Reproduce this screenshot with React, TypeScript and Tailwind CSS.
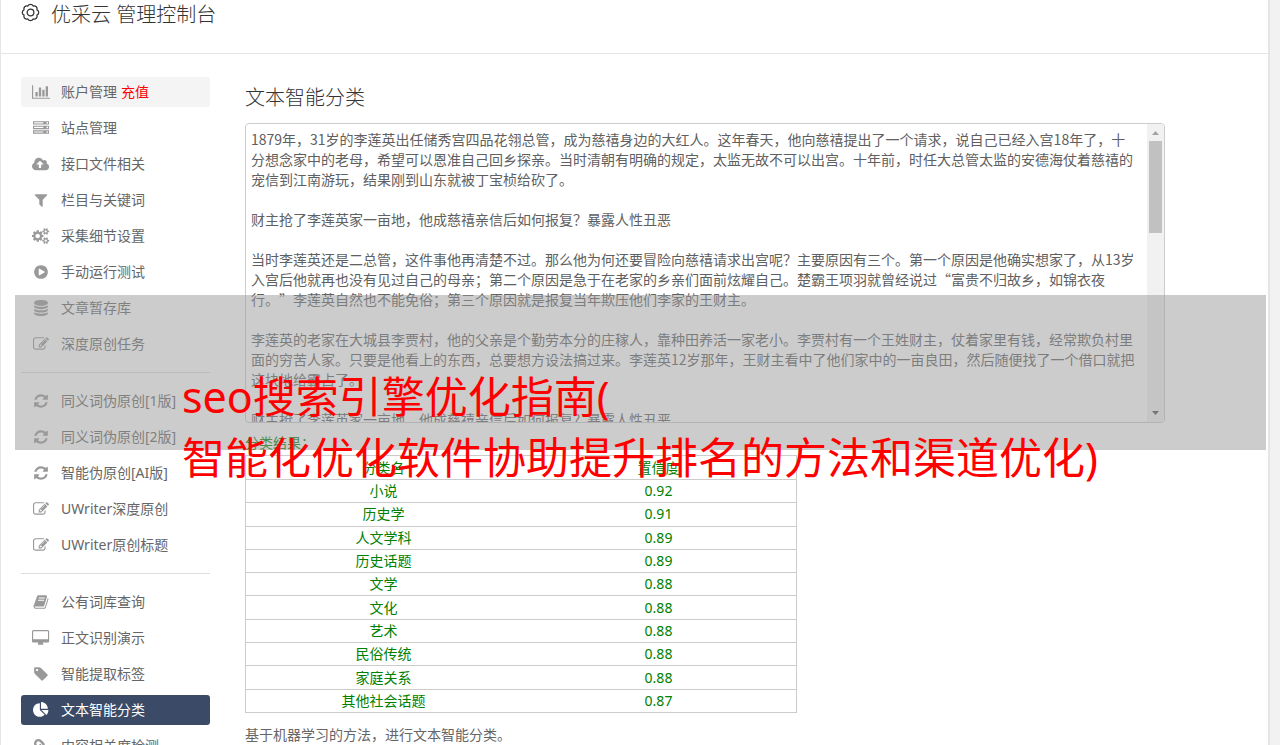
import { type ReactNode } from "react";
import { FaLink } from "react-icons/fa";

type GlyphName =
  | "chart"
  | "server"
  | "upload"
  | "filter"
  | "cogs"
  | "play"
  | "database"
  | "edit"
  | "refresh"
  | "book"
  | "desktop"
  | "tag"
  | "pie";

// [viewBox width, path]; every glyph is 1792 units high
const GLYPHS: Record<GlyphName, [number, string]> = {
  chart: [2048, "M640 896v512h-256v-512h256zm384-512v1024h-256v-1024h256zm1024 1152v128h-2048v-1536h128v1408h1920zm-640-896v768h-256v-768h256zm384-384v1152h-256v-1152h256z"],
  server: [1792, "M128 1408h1024v-128h-1024v128zm0-512h1024v-128h-1024v128zm1568 448q0-40-28-68t-68-28-68 28-28 68 28 68 68 28 68-28 28-68zm-1568-960h1024v-128h-1024v128zm1568 448q0-40-28-68t-68-28-68 28-28 68 28 68 68 28 68-28 28-68zm0-512q0-40-28-68t-68-28-68 28-28 68 28 68 68 28 68-28 28-68zm96 832v384h-1792v-384h1792zm0-512v384h-1792v-384h1792zm0-512v384h-1792v-384h1792z"],
  upload: [1920, "M1280 928q0-14-9-23l-352-352q-9-9-23-9t-23 9l-351 351q-10 12-10 24 0 14 9 23t23 9h224v352q0 13 9.5 22.5t22.5 9.5h192q13 0 22.5-9.5t9.5-22.5v-352h224q13 0 22.5-9.5t9.5-22.5zm640 288q0 159-112.5 271.5t-271.5 112.5h-1088q-185 0-316.5-131.5t-131.5-316.5q0-130 70-240t188-165q-2-30-2-43 0-212 150-362t362-150q156 0 285.5 87t188.5 231q71-62 166-62 106 0 181 75t75 181q0 76-41 138 130 31 213.5 135.5t83.5 238.5z"],
  filter: [1792, "M1595 295q17 41-14 70l-493 493v742q0 42-39 59-13 5-25 5-27 0-45-19l-256-256q-19-19-19-45v-486l-493-493q-31-29-14-70 17-39 59-39h1280q42 0 59 39z"],
  cogs: [1920, "M896 896q0-106-75-181t-181-75-181 75-75 181 75 181 181 75 181-75 75-181zm768 512q0-52-38-90t-90-38-90 38-38 90q0 53 37.5 90.5t90.5 37.5 90.5-37.5 37.5-90.5zm0-1024q0-52-38-90t-90-38-90 38-38 90q0 53 37.5 90.5t90.5 37.5 90.5-37.5 37.5-90.5zm-384 421v185q0 10-7 19.5t-16 10.5l-155 24q-11 35-32 76 34 48 90 115 7 11 7 20 0 12-7 19-23 30-82.5 89.5t-78.5 59.5q-11 0-21-7l-115-90q-37 19-77 31-11 108-23 155-7 24-30 24h-186q-11 0-20-7.5t-10-17.5l-23-153q-34-10-75-31l-118 89q-7 7-20 7-11 0-21-8-144-133-144-160 0-9 7-19 10-14 41-53t47-61q-23-44-35-82l-152-24q-10-1-17-9.5t-7-19.5v-185q0-10 7-19.5t16-10.5l155-24q11-35 32-76-34-48-90-115-7-11-7-20 0-12 7-20 22-30 82-89t79-59q11 0 21 7l115 90q34-18 77-32 11-108 23-154 7-24 30-24h186q11 0 20 7.5t10 17.5l23 153q34 10 75 31l118-89q8-7 20-7 11 0 21 8 144 133 144 160 0 8-7 19-12 16-42 54t-45 60q23 48 34 82l152 23q10 2 17 10.5t7 19.5zm640 533v140q0 16-149 31-12 27-30 52 51 113 51 138 0 4-4 7-122 71-124 71-8 0-46-47t-52-68q-20 2-30 2t-30-2q-14 21-52 68t-46 47q-2 0-124-71-4-3-4-7 0-25 51-138-18-25-30-52-149-15-149-31v-140q0-16 149-31 13-29 30-52-51-113-51-138 0-4 4-7 4-2 35-20t59-34 30-16q8 0 46 46.5t52 67.5q20-2 30-2t30 2q51-71 92-112l6-2q4 0 124 70 4 3 4 7 0 25-51 138 17 23 30 52 149 15 149 31zm0-1024v140q0 16-149 31-12 27-30 52 51 113 51 138 0 4-4 7-122 71-124 71-8 0-46-47t-52-68q-20 2-30 2t-30-2q-14 21-52 68t-46 47q-2 0-124-71-4-3-4-7 0-25 51-138-18-25-30-52-149-15-149-31v-140q0-16 149-31 13-29 30-52-51-113-51-138 0-4 4-7 4-2 35-20t59-34 30-16q8 0 46 46.5t52 67.5q20-2 30-2t30 2q51-71 92-112l6-2q4 0 124 70 4 3 4 7 0 25-51 138 17 23 30 52 149 15 149 31z"],
  play: [1792, "M896 128q209 0 385.5 103t279.5 279.5 103 385.5-103 385.5-279.5 279.5-385.5 103-385.5-103-279.5-279.5-103-385.5 103-385.5 279.5-279.5 385.5-103zm384 823q32-18 32-55t-32-55l-544-320q-31-19-64-1-32 19-32 56v640q0 37 32 56 16 8 32 8 17 0 32-9z"],
  database: [1792, "M896 768q237 0 443-43t325-127v170q0 69-103 128t-280 93.5-385 34.5-385-34.5-280-93.5-103-128v-170q119 84 325 127t443 43zm0 768q237 0 443-43t325-127v170q0 69-103 128t-280 93.5-385 34.5-385-34.5-280-93.5-103-128v-170q119 84 325 127t443 43zm0-384q237 0 443-43t325-127v170q0 69-103 128t-280 93.5-385 34.5-385-34.5-280-93.5-103-128v-170q119 84 325 127t443 43zm0-1152q208 0 385 34.5t280 93.5 103 128v128q0 69-103 128t-280 93.5-385 34.5-385-34.5-280-93.5-103-128v-128q0-69 103-128t280-93.5 385-34.5z"],
  edit: [1792, "M888 1184l116-116-152-152-116 116v56h96v96h56zm440-720q-16-16-33 1l-350 350q-17 17-1 33t33-1l350-350q17-17 1-33zm80 594v190q0 119-84.5 203.5t-203.5 84.5h-832q-119 0-203.5-84.5t-84.5-203.5v-832q0-119 84.5-203.5t203.5-84.5h832q63 0 117 25 15 7 18 23 3 17-9 29l-49 49q-14 14-32 8-23-6-45-6h-832q-66 0-113 47t-47 113v832q0 66 47 113t113 47h832q66 0 113-47t47-113v-126q0-13 9-22l64-64q15-15 35-7t20 29zm-96-738l288 288-672 672h-288v-288zm444 132l-92 92-288-288 92-92q28-28 68-28t68 28l152 152q28 28 28 68t-28 68z"],
  refresh: [1792, "M1639 1056q0 5-1 7-64 268-268 434.5t-478 166.5q-146 0-282.5-55t-243.5-157l-129 129q-19 19-45 19t-45-19-19-45v-448q0-26 19-45t45-19h448q26 0 45 19t19 45-19 45l-137 137q71 66 161 102t187 36q134 0 250-65t186-179q11-17 53-117 8-23 30-23h192q13 0 22.5 9.5t9.5 22.5zm25-800v448q0 26-19 45t-45 19h-448q-26 0-45-19t-19-45 19-45l138-138q-148-137-349-137-134 0-250 65t-186 179q-11 17-53 117-8 23-30 23h-199q-13 0-22.5-9.5t-9.5-22.5v-7q65-268 270-434.5t480-166.5q146 0 284 55.5t245 156.5l130-129q19-19 45-19t45 19 19 45z"],
  book: [1792, "M1703 478q40 57 18 129l-275 906q-19 64-76.5 107.5t-122.5 43.5h-923q-77 0-148.5-53.5t-99.5-131.5q-24-67-2-127 0-4 3-27t4-37q1-8-3-21.5t-3-19.5q2-11 8-21t16.5-23.5 16.5-23.5q23-38 45-91.5t30-91.5q3-10 .5-30t-.5-28q3-11 17-28t17-23q21-36 42-92t25-90q1-9-2.5-32t.5-28q4-13 22-30.5t22-22.5q19-26 42.5-84.5t27.5-96.5q1-8-3-25.5t-2-26.5q2-8 9-18t18-23 17-21q8-12 16.5-30.5t15-35 16-36 19.5-32 26.5-23.5 36-11.5 47.5 5.5l-1 3q38-9 51-9h761q74 0 114 56t18 130l-274 906q-36 119-71.5 153.5t-128.5 34.5h-869q-27 0-38 15-11 16-1 43 24 70 144 70h923q29 0 56-15.5t35-41.5l300-987q7-22 5-57 38 15 59 43zm-1064 2q-4 13 2 22.5t20 9.5h608q13 0 25.5-9.5t16.5-22.5l21-64q4-13-2-22.5t-20-9.5h-608q-13 0-25.5 9.5t-16.5 22.5zm-83 256q-4 13 2 22.5t20 9.5h608q13 0 25.5-9.5t16.5-22.5l21-64q4-13-2-22.5t-20-9.5h-608q-13 0-25.5 9.5t-16.5 22.5z"],
  desktop: [1920, "M1792 992v-832q0-13-9.5-22.5t-22.5-9.5h-1600q-13 0-22.5 9.5t-9.5 22.5v832q0 13 9.5 22.5t22.5 9.5h1600q13 0 22.5-9.5t9.5-22.5zm128-832v1088q0 66-47 113t-113 47h-544q0 37 16 77.5t32 71 16 43.5q0 26-19 45t-45 19h-512q-26 0-45-19t-19-45q0-14 16-44t32-70 16-78h-544q-66 0-113-47t-47-113v-1088q0-66 47-113t113-47h1600q66 0 113 47t47 113z"],
  tag: [1792, "M576 448q0-53-37.5-90.5t-90.5-37.5-90.5 37.5-37.5 90.5 37.5 90.5 90.5 37.5 90.5-37.5 37.5-90.5zm1067 576q0 53-37 90l-491 492q-39 37-91 37-53 0-90-37l-715-716q-38-37-64.5-101t-26.5-117v-416q0-52 38-90t90-38h416q53 0 117 26.5t102 64.5l715 714q37 39 37 91z"],
  pie: [1792, "M768 890l546 546q-106 108-247.5 168t-298.5 60q-209 0-385.5-103t-279.5-279.5-103-385.5 103-385.5 279.5-279.5 385.5-103v762zm187 6h773q0 157-60 298.5t-168 247.5zm709-128h-768v-768q209 0 385.5 103t279.5 279.5 103 385.5z"],
};

function Glyph({ name }: { name: GlyphName }) {
  const [width, d] = GLYPHS[name];
  return (
    <svg viewBox={`0 0 ${width} 1792`} className="h-4 w-auto" fill="currentColor" aria-hidden="true">
      <path d={d} />
    </svg>
  );
}

function GearLogo() {
  return (
    <svg
      viewBox="0 0 18 18"
      className="size-[19px]"
      fill="none"
      stroke="currentColor"
      strokeWidth="1.2"
      strokeLinejoin="round"
      aria-hidden="true"
    >
      <path d="M15.1 6.47A2.75 2.75 0 0 1 15.1 11.53A2.75 2.75 0 0 1 11.53 15.1A2.75 2.75 0 0 1 6.47 15.1A2.75 2.75 0 0 1 2.9 11.53A2.75 2.75 0 0 1 2.9 6.47A2.75 2.75 0 0 1 6.47 2.9A2.75 2.75 0 0 1 11.53 2.9A2.75 2.75 0 0 1 15.1 6.47Z" />
      <circle cx="9" cy="9" r="3.2" />
    </svg>
  );
}

type NavItem = {
  label: string;
  icon: ReactNode;
  note?: string;
  state?: "hover" | "active";
};

const NAV_GROUPS: NavItem[][] = [
  [
    { label: "账户管理", icon: <Glyph name="chart" />, note: "充值", state: "hover" },
    { label: "站点管理", icon: <Glyph name="server" /> },
    { label: "接口文件相关", icon: <Glyph name="upload" /> },
    { label: "栏目与关键词", icon: <Glyph name="filter" /> },
    { label: "采集细节设置", icon: <Glyph name="cogs" /> },
    { label: "手动运行测试", icon: <Glyph name="play" /> },
    { label: "文章暂存库", icon: <Glyph name="database" /> },
    { label: "深度原创任务", icon: <Glyph name="edit" /> },
  ],
  [
    { label: "同义词伪原创[1版]", icon: <Glyph name="refresh" /> },
    { label: "同义词伪原创[2版]", icon: <Glyph name="refresh" /> },
    { label: "智能伪原创[AI版]", icon: <Glyph name="refresh" /> },
    { label: "UWriter深度原创", icon: <Glyph name="edit" /> },
    { label: "UWriter原创标题", icon: <Glyph name="edit" /> },
  ],
  [
    { label: "公有词库查询", icon: <Glyph name="book" /> },
    { label: "正文识别演示", icon: <Glyph name="desktop" /> },
    { label: "智能提取标签", icon: <Glyph name="tag" /> },
    { label: "文本智能分类", icon: <Glyph name="pie" />, state: "active" },
    { label: "内容相关度检测", icon: <FaLink size={15} className="-scale-x-100" /> },
  ],
];

const RESULTS: Array<[string, string]> = [
  ["小说", "0.92"],
  ["历史学", "0.91"],
  ["人文学科", "0.89"],
  ["历史话题", "0.89"],
  ["文学", "0.88"],
  ["文化", "0.88"],
  ["艺术", "0.88"],
  ["民俗传统", "0.88"],
  ["家庭关系", "0.88"],
  ["其他社会话题", "0.87"],
];

const ARTICLE = [
  "1879年，31岁的李莲英出任储秀宫四品花翎总管，成为慈禧身边的大红人。这年春天，他向慈禧提出了一个请求，说自己已经入宫18年了，十分想念家中的老母，希望可以恩准自己回乡探亲。当时清朝有明确的规定，太监无故不可以出宫。十年前，时任大总管太监的安德海仗着慈禧的宠信到江南游玩，结果刚到山东就被丁宝桢给砍了。",
  "财主抢了李莲英家一亩地，他成慈禧亲信后如何报复？暴露人性丑恶",
  "当时李莲英还是二总管，这件事他再清楚不过。那么他为何还要冒险向慈禧请求出宫呢？主要原因有三个。第一个原因是他确实想家了，从13岁入宫后他就再也没有见过自己的母亲；第二个原因是急于在老家的乡亲们面前炫耀自己。楚霸王项羽就曾经说过“富贵不归故乡，如锦衣夜行。”李莲英自然也不能免俗；第三个原因就是报复当年欺压他们李家的王财主。",
  "李莲英的老家在大城县李贾村，他的父亲是个勤劳本分的庄稼人，靠种田养活一家老小。李贾村有一个王姓财主，仗着家里有钱，经常欺负村里面的穷苦人家。只要是他看上的东西，总要想方设法搞过来。李莲英12岁那年，王财主看中了他们家中的一亩良田，然后随便找了一个借口就把这块地给霸占了。",
  "财主抢了李莲英家一亩地，他成慈禧亲信后如何报复？暴露人性丑恶",
].join("\n\n");

const STATE_CLASS = {
  idle: "text-[#666]",
  hover: "bg-[#f4f4f4] text-[#666]",
  active: "bg-[#3b4a66] text-white",
};

function NavLink({ label, icon, note, state }: NavItem) {
  return (
    <a
      href="#"
      className={`flex h-[30px] items-center rounded-[3px] text-sm whitespace-nowrap ${STATE_CLASS[state ?? "idle"]}`}
    >
      <span className={`flex w-10 shrink-0 justify-center ${state === "active" ? "text-white" : "text-[#999]"}`}>
        {icon}
      </span>
      {label}
      {note && <span className="ml-1 text-[#f00]">{note}</span>}
    </a>
  );
}

function Sidebar() {
  return (
    <nav className="w-[189px] shrink-0">
      {NAV_GROUPS.map((group, i) => (
        <div key={i} className={i > 0 ? "mt-[13px] border-t border-[#ddd] pt-[13px]" : ""}>
          <ul className="flex flex-col gap-[6px]">
            {group.map((item) => (
              <li key={item.label}>
                <NavLink {...item} />
              </li>
            ))}
          </ul>
        </div>
      ))}
    </nav>
  );
}

function ArticleBox() {
  return (
    <div className="flex h-[300px] max-w-[920px] overflow-hidden rounded border border-[#ccc]">
      <textarea
        aria-label="文本内容"
        defaultValue={ARTICLE}
        className="min-w-0 flex-1 resize-none overflow-y-auto py-[5px] pr-2 pl-[5px] font-['Noto_Sans_CJK_SC',sans-serif] text-sm leading-5 text-[#606060] outline-none [scrollbar-width:none] [text-spacing-trim:space-all]"
      />
      <div className="flex w-[17px] shrink-0 flex-col items-center bg-[#f1f1f1]" aria-hidden="true">
        <svg viewBox="0 0 17 17" className="size-[17px]">
          <path d="M5 11h7L8.5 7z" fill="#a3a3a3" />
        </svg>
        <div className="h-[92px] w-[13px] bg-[#c1c1c1]" />
        <svg viewBox="0 0 17 17" className="mt-auto size-[17px]">
          <path d="M5 6h7L8.5 10z" fill="#505050" />
        </svg>
      </div>
    </div>
  );
}

function ResultTable() {
  return (
    <table className="h-[258px] w-[552px] table-fixed border-collapse text-center text-sm leading-5 text-[green]">
      <thead>
        <tr className="h-6">
          <th className="border-y border-l border-[#ccc] p-0 font-normal">分类名</th>
          <th className="border-y border-r border-[#ccc] p-0 font-normal">置信度</th>
        </tr>
      </thead>
      <tbody>
        {RESULTS.map(([name, score]) => (
          <tr key={name}>
            <td className="border-y border-l border-[#ccc] p-0">{name}</td>
            <td className="border-y border-r border-[#ccc] p-0">{score}</td>
          </tr>
        ))}
      </tbody>
    </table>
  );
}

export default function App() {
  return (
    <div
      lang="zh-CN"
      className="relative h-screen overflow-hidden bg-[#f2f2f2] pr-[10px] font-['Noto_Sans','Noto_Sans_CJK_SC',sans-serif]"
    >
      <div className="min-h-screen border-r-2 border-l border-[#e5e5e5] bg-white">
        <header className="flex h-[54px] items-start border-b border-[#e5e5e5] pl-5 text-[#333]">
          <div className="flex items-start gap-[11px]">
            <span className="pt-[3px]">
              <GearLogo />
            </span>
            <h1 className="text-xl leading-[30px] font-light">优采云 管理控制台</h1>
          </div>
        </header>

        <div className="flex gap-[35px] pt-[23px] pl-5">
          <Sidebar />
          <main className="min-w-0 flex-1 pt-[6px] pr-5 text-[#666]">
            <h2 className="mb-[11px] text-xl leading-[29px] font-light text-[#333]">文本智能分类</h2>
            <ArticleBox />
            <p className="mt-[10px] mb-[2px] text-sm leading-5 text-[green]">分类结果：</p>
            <ResultTable />
            <p className="mt-3 text-sm leading-5">基于机器学习的方法，进行文本智能分类。</p>
          </main>
        </div>
      </div>

      {/* Caption banner floating over the page; its second line spills past the band */}
      <div className="absolute top-[295px] right-[14px] left-[15px] h-[155px] bg-[#999]/50 pt-[71px] pl-[167px]">
        <p className="text-[43px] leading-[61px] whitespace-nowrap text-[#f00]">
          seo搜索引擎优化指南(
          <br />
          智能化优化软件协助提升排名的方法和渠道优化)
        </p>
      </div>
    </div>
  );
}
